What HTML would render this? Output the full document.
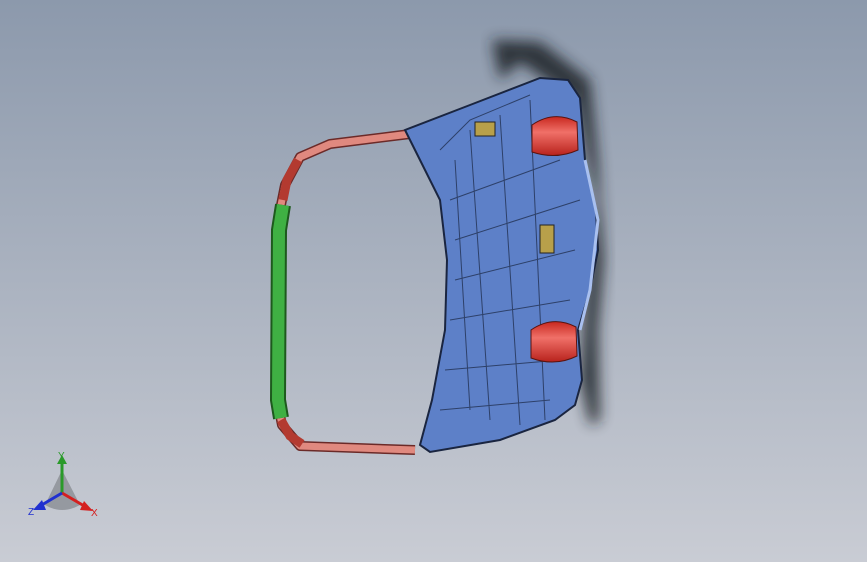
<!DOCTYPE html>
<html><head><style>
html,body{margin:0;padding:0;width:867px;height:562px;overflow:hidden}
</style></head><body>
<svg width="867" height="562" viewBox="0 0 867 562" xmlns="http://www.w3.org/2000/svg">
<defs>
<linearGradient id="bg" x1="0" y1="0" x2="0" y2="1">
<stop offset="0" stop-color="#8c99ac"/><stop offset="1" stop-color="#c9ccd4"/>
</linearGradient>
<filter id="bl"><feGaussianBlur stdDeviation="7"/></filter>
<linearGradient id="lamp" x1="0" y1="0" x2="0" y2="1">
<stop offset="0" stop-color="#c8281f"/><stop offset="0.4" stop-color="#f07068"/><stop offset="1" stop-color="#b8221c"/>
</linearGradient>
</defs>
<rect width="867" height="562" fill="url(#bg)"/>
<!-- shadow -->
<path d="M492 40 L540 42 L590 80 L598 160 L604 260 L598 330 L600 420 L590 425 L580 380 L585 300 L595 200 L575 100 L520 62 L500 80 Z" fill="#1e2128" opacity="0.85" filter="url(#bl)"/>
<!-- frame -->
<path d="M410 134 L330 144 L300 157 L285 185 L279 215 L277 400 L282 425 L300 446 L415 450" fill="none" stroke="#6b2a28" stroke-width="10" stroke-linejoin="round"/>
<path d="M410 134 L330 144 L300 157 L285 185 L279 215 L277 400 L282 425 L300 446 L415 450" fill="none" stroke="#e0897f" stroke-width="7" stroke-linejoin="round"/>
<path d="M283 205 L279 230 L278 400 L281 418" fill="none" stroke="#1d5a1d" stroke-width="16"/>
<path d="M283 205 L279 230 L278 400 L281 418" fill="none" stroke="#3fb043" stroke-width="12"/>
<path d="M298 160 L287 180 L283 200" fill="none" stroke="#b33a30" stroke-width="9"/>
<path d="M281 420 L290 436 L302 444" fill="none" stroke="#b33a30" stroke-width="9"/>
<!-- body -->
<path d="M405 130 L470 105 L540 78 L568 80 L580 98 L585 160 L596 210 L598 250 L590 290 L578 330 L582 380 L575 405 L555 420 L500 440 L430 452 L420 445 L432 400 L445 330 L447 260 L440 200 L420 160 Z" fill="#5d80c8" stroke="#1a2540" stroke-width="2"/>
<path d="M440 150 L470 120 L530 95 M450 200 L560 160 M455 240 L580 200 M455 280 L575 250 M450 320 L570 300 M445 370 L560 360 M440 410 L550 400 M470 130 L490 420 M500 115 L520 425 M530 100 L545 420 M455 160 L470 410" stroke="#1a2540" stroke-width="1" fill="none" opacity="0.7"/>
<path d="M585 160 L598 220 L590 290 L580 330" stroke="#a9c0ef" stroke-width="3" fill="none"/>
<rect x="540" y="225" width="14" height="28" fill="#b8a04a" stroke="#222" />
<rect x="475" y="122" width="20" height="14" fill="#b8a04a" stroke="#222" />
<!-- lamps -->
<path d="M532 125 Q554 110 577 122 L578 150 Q556 160 532 152 Z" fill="url(#lamp)" stroke="#5a1410"/>
<path d="M531 330 Q553 315 576 327 L577 356 Q555 367 531 358 Z" fill="url(#lamp)" stroke="#5a1410"/>
<!-- triad -->
<path d="M45 505 L62 470 L80 505 Q62 515 45 505 Z" fill="#8a8d94" opacity="0.8"/>
<line x1="62" y1="493" x2="62" y2="462" stroke="#2a9a2a" stroke-width="3"/>
<path d="M57 464 L62 455 L67 464 Z" fill="#2a9a2a"/>
<line x1="62" y1="493" x2="86" y2="507" stroke="#d42020" stroke-width="3"/>
<path d="M84 501 L93 511 L80 510 Z" fill="#d42020"/>
<line x1="62" y1="493" x2="40" y2="506" stroke="#2030d0" stroke-width="3"/>
<path d="M42 500 L33 510 L46 510 Z" fill="#2030d0"/>
<text x="58" y="459" font-family="Liberation Sans" font-size="10" fill="#2a9a2a">Y</text>
<text x="91" y="516" font-family="Liberation Sans" font-size="10" fill="#d42020">X</text>
<text x="28" y="515" font-family="Liberation Sans" font-size="10" fill="#2030d0">Z</text>
</svg>
</body></html>
